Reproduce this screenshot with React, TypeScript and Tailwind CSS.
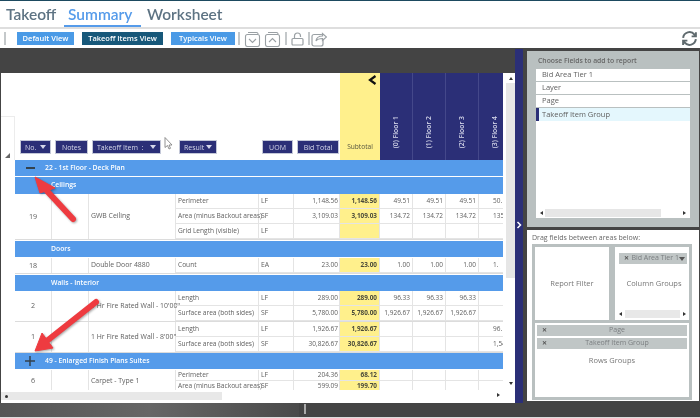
import React from "react";

const font = { fontFamily: '"Open Sans", "Liberation Sans", sans-serif' };

function Cell({ w, children, cls = "" }: { w: string; children?: React.ReactNode; cls?: string }) {
  return <div className={`${w} shrink-0 h-full flex items-center whitespace-nowrap border-r border-[#e4e4e4] ${cls}`}>{children}</div>;
}

type Sub = { r: string; u: string; b: string; s: string; f: string[] };

function SubRow({ r, u, b, s, f, h }: Sub & { h: string }) {
  return (
    <div className={`flex ${h} border-b border-[#e4e4e4]`}>
      <Cell w="w-[83px]" cls="pl-[2px] text-[6.600px]">{r}</Cell>
      <Cell w="w-[35px]" cls="pl-[2px] text-[6.800px]">{u}</Cell>
      <Cell w="w-[46px]" cls="justify-end pr-[1px] text-[6.500px]">{b}</Cell>
      <Cell w="w-[40px]" cls="justify-end pr-[2px] bg-[#fff08c] font-bold text-[6.400px] text-[#4a4a3a]">{s}</Cell>
      {f.map((v, i) => (
        <Cell key={i} w="w-[33px]" cls={`text-[6.500px] ${i === 3 ? "justify-start pl-[14px]" : "justify-end pr-[2px]"}`}>{v}</Cell>
      ))}
    </div>
  );
}

function Group({ no, item, subs, h = "h-[15px]" }: { no: string; item: string; subs: Sub[]; h?: string }) {
  return (
    <div className="flex border-b border-[#dcdcdc]">
      <Cell w="w-[37px]" cls="justify-center !h-auto">{no}</Cell>
      <Cell w="w-[37px]" cls="!h-auto" />
      <Cell w="w-[87px]" cls="pl-[2px] !h-auto text-[6.900px]">{item}</Cell>
      <div className="flex flex-col">
        {subs.map((s, i) => <SubRow key={i} {...s} h={h} />)}
      </div>
    </div>
  );
}

function Band({ label, indent, h = "h-[16px]" }: { label: string; indent: string; h?: string }) {
  return <div className={`${h} shrink-0 bg-[#559bea] flex items-center text-white font-semibold text-[6.800px] ${indent}`}>{label}</div>;
}

function HeadBtn({ cls, label, tri }: { cls: string; label: string; tri?: boolean }) {
  return (
    <div className={`${cls} h-[14px] bg-[#2b2f77] border border-[#c4c8d8] text-[#d6d8ea] flex items-center justify-between px-[4px] text-[7px] shrink-0`}>
      <span className="whitespace-pre">{label}</span>
      {tri && <span className="w-0 h-0 border-l-[3px] border-r-[3px] border-t-[4px] border-l-transparent border-r-transparent border-t-[#d6d8ea]" />}
    </div>
  );
}

function ViewBtn({ label, cls }: { label: string; cls: string }) {
  return <div className={`h-[13px] flex items-center justify-center text-white font-semibold text-[7.500px] whitespace-nowrap ${cls}`}>{label}</div>;
}

function Floor({ label }: { label: string }) {
  return (
    <div className="w-[33px] shrink-0 h-full bg-[#2b2f77] border-r border-[#44488a] flex items-end justify-center pb-[12px]">
      <span className="[writing-mode:vertical-rl] rotate-180 text-[#d6d8ea] text-[6.800px] font-semibold whitespace-nowrap">{label}</span>
    </div>
  );
}

function Stack({ up }: { up?: boolean }) {
  return (
    <svg width="17" height="16" viewBox="0 0 17 16" fill="none" stroke="#9aa0a4" strokeWidth="1.100">
      <path d="M4 1.500h8.500a1.500 1.500 0 0 1 1.500 1.500" />
      <rect x="1.500" y="3.500" width="14" height="12" rx="2" />
      <path d={up ? "M5 11l3.500-3.500 3.500 3.500" : "M5 8l3.500 3.500 3.500-3.500"} />
    </svg>
  );
}

const Sep = () => <div className="w-[2px] h-[13px] bg-[#c4c8ca] shrink-0" />;

function Chip({ label, cls, filter }: { label: string; cls: string; filter?: boolean }) {
  return (
    <div className={`h-[11px] bg-[#c0c6c6] flex items-center text-[#7a7e80] text-[7px] px-[5px] ${cls}`}>
      <span className="text-[6px] font-bold text-[#555] w-[10px]">✕</span>
      <span className="flex-1 text-center whitespace-nowrap">{label}</span>
      {filter && <span className="w-0 h-0 border-l-[3px] border-r-[3px] border-t-[4px] border-l-transparent border-r-transparent border-t-[#555] -mr-[3px]" />}
    </div>
  );
}

const none = ["", "", "", ""];

export default function App() {
  return (
    <div style={font} className="relative w-[700px] h-[418px] overflow-hidden bg-white flex flex-col blur-[0.35px]">
      <div className="h-[1px] bg-[#1d4a60] shrink-0" />
      <div className="h-[26px] shrink-0 flex items-start pl-[6px] text-[15.500px] leading-[26px] text-[#5d7383] font-semibold" style={{ fontFamily: "Lato, sans-serif" }}>
        <span className="w-[58px]">Takeoff</span>
        <span className="w-[77px] h-[26px] pl-[4px] border-b-[2px] border-[#559bea] text-[#559bea]">Summary</span>
        <span className="ml-[6px]">Worksheet</span>
      </div>
      <div className="h-[2px] bg-[#dedede] shrink-0" />
      <div className="h-[19px] shrink-0 flex items-center pl-[4px] pr-[2px]">
        <Sep />
        <ViewBtn label="Default View" cls="ml-[11px] w-[57px] bg-[#4a9ae6]" />
        <ViewBtn label="Takeoff Items View" cls="ml-[8px] w-[81px] bg-[#17587a]" />
        <ViewBtn label="Typicals View" cls="ml-[8px] w-[64px] bg-[#4a9ae6]" />
        <div className="ml-[3px]"><Sep /></div>
        <div className="ml-[4px]"><Stack /></div>
        <div className="ml-[3px]"><Stack up /></div>
        <div className="ml-[4px]"><Sep /></div>
        <svg className="ml-[4px]" width="13" height="14" viewBox="0 0 13 14" fill="none" stroke="#9aa0a4" strokeWidth="1.200">
          <rect x="1" y="6.500" width="11" height="6.500" rx="1" />
          <path d="M3.500 6.500V4a3 3 0 0 1 6 0v1" />
        </svg>
        <div className="ml-[4px]"><Sep /></div>
        <svg className="ml-[1px]" width="16" height="16" viewBox="0 0 16 16" fill="none" stroke="#9aa0a4" strokeWidth="1.200">
          <rect x="1" y="3.500" width="11" height="11.500" rx="2" />
          <path d="M5 10c.5-3.500 3-5 6.500-5V2.500L15.500 6l-4 3.500V7.500c-3 0-5 .5-6.500 2.500z" fill="#fff" />
        </svg>
        <svg className="ml-auto" width="17" height="17" viewBox="0 0 24 24" fill="none" stroke="#5f6a6e" strokeWidth="2.800">
          <path d="M3 11a9 9 0 0 1 16-4.500L21 9M21 3v6h-6" />
          <path d="M21 13a9 9 0 0 1-16 4.500L3 15M3 21v-6h6" />
        </svg>
      </div>

      <div className="flex-1 flex bg-[#444444] pt-[1px] min-h-0">
        {/* left report */}
        <div className="w-[515px] shrink-0 pl-[1px] flex flex-col">
          <div className="h-[24px] shrink-0" />
          <div className="h-[330px] bg-white flex flex-col text-[7.200px] text-[#5e5e5e] leading-none">
            <div className="flex h-[317px]">
              <div className="w-[14px] shrink-0 flex flex-col">
                <div className="h-[43px] shrink-0" />
                <div className="h-[44px] shrink-0 border-t border-r border-[#ececec] flex items-end justify-center pb-[2px]">
                  <span className="w-0 h-0 border-b-[5px] border-l-[5px] border-b-[#666] border-l-transparent" />
                </div>
              </div>
              <div className="w-[488px] shrink-0 overflow-hidden flex flex-col">
                <div className="h-[87px] shrink-0 flex">
                  <div className="w-[325px] shrink-0 flex items-end pb-[6px]">
                    <HeadBtn cls="ml-[5px] w-[31px]" label="No." tri />
                    <HeadBtn cls="ml-[4px] w-[33px] justify-center" label="Notes" />
                    <HeadBtn cls="ml-[4px] w-[69px]" label="Takeoff Item  :" tri />
                    <HeadBtn cls="ml-[18px] w-[38px]" label="Result" tri />
                    <HeadBtn cls="ml-[45px] w-[31px] !justify-center" label="UOM" />
                    <HeadBtn cls="ml-[4px] w-[42px] !justify-center" label="Bid Total" />
                  </div>
                  <div className="w-[40px] shrink-0 bg-[#fff08c] flex flex-col items-center justify-between pb-[9px] pt-[2px] text-[6.600px] text-[#55553f]">
                    <svg className="self-end mr-[3px]" width="9" height="10" viewBox="0 0 9 10" fill="none" stroke="#111" strokeWidth="2.200"><path d="M7.500 1L2 5l5.500 4" /></svg>
                    <span>Subtotal</span>
                  </div>
                  <Floor label="(0) Floor 1" />
                  <Floor label="(1) Floor 2" />
                  <Floor label="(2) Floor 3" />
                  <Floor label="(3) Floor 4" />
                </div>
                <Band label="22 - 1st Floor - Deck Plan" indent="pl-[30px]" />
                <div className="h-[1px] shrink-0" />
                <Band label="Ceilings" indent="pl-[36px]" h="h-[17px]" />
                <Group no="19" item="GWB Ceiling" subs={[
                  { r: "Perimeter", u: "LF", b: "1,148.56", s: "1,148.56", f: ["49.51", "49.51", "49.51", "50."] },
                  { r: "Area (minus Backout areas)", u: "SF", b: "3,109.03", s: "3,109.03", f: ["134.72", "134.72", "134.72", "135."] },
                  { r: "Grid Length (visible)", u: "LF", b: "", s: "", f: none },
                ]} />
                <div className="h-[1px] shrink-0" />
                <Band label="Doors" indent="pl-[36px]" />
                <div className="h-[1px] shrink-0" />
                <Group no="18" item="Double Door 4880" subs={[
                  { r: "Count", u: "EA", b: "23.00", s: "23.00", f: ["1.00", "1.00", "1.00", "1."] },
                ]} />
                <div className="h-[1px] shrink-0" />
                <Band label="Walls - Interior" indent="pl-[36px]" />
                <Group no="2" item="1 Hr Fire Rated Wall - 10'00&quot;" subs={[
                  { r: "Length", u: "LF", b: "289.00", s: "289.00", f: ["96.33", "96.33", "96.33", ""] },
                  { r: "Surface area (both sides)", u: "SF", b: "5,780.00", s: "5,780.00", f: ["1,926.67", "1,926.67", "1,926.67", ""] },
                ]} />
                <Group no="1" item="1 Hr Fire Rated Wall - 8'00&quot;" subs={[
                  { r: "Length", u: "LF", b: "1,926.67", s: "1,926.67", f: ["", "", "", "96."] },
                  { r: "Surface area (both sides)", u: "SF", b: "30,826.67", s: "30,826.67", f: ["", "", "", "1,541."] },
                ]} />
                <Band label="49 - Enlarged Finish Plans Suites" indent="pl-[30px]" />
                <div className="h-[1px] shrink-0" />
                <Group no="6" item="Carpet - Type 1" subs={[
                  { r: "Perimeter", u: "LF", b: "204.36", s: "68.12", f: none },
                  { r: "Area (minus Backout areas)", u: "SF", b: "599.09", s: "199.70", f: none },
                ]} h="h-[11px]" />
              </div>
              <div className="flex-1 flex flex-col items-center pl-[3px]">
                <div className="h-[10px] shrink-0 flex items-center">
                  <span className="w-0 h-0 border-l-[2px] border-r-[2px] border-b-[3px] border-l-transparent border-r-transparent border-b-[#333]" />
                </div>
                <div className="w-[9px] h-[195px] shrink-0 bg-[#e6e6e6]" />
                <div className="flex-1 flex items-end pb-[5px]">
                  <span className="w-0 h-0 border-l-[2.500px] border-r-[2.500px] border-t-[3px] border-l-transparent border-r-transparent border-t-[#333]" />
                </div>
              </div>
            </div>
            <div className="h-[13px] shrink-0 flex items-start pt-[2px]">
              <div className="w-[221px] h-[8px] bg-[#e8e8e8] flex items-center pl-[4px]">
                <span className="w-[3px] h-[3px] rounded-full bg-[#333]" />
              </div>
              <span className="ml-[275px] mt-[1px] w-0 h-0 border-t-[2.500px] border-b-[2.500px] border-l-[3px] border-t-transparent border-b-transparent border-l-[#333]" />
            </div>
          </div>
          <div className="flex-1 flex items-start -ml-[1px]">
            <div className="w-[299px] h-full bg-gradient-to-r from-[#555] via-[#666] to-[#4a4a4a]" />
            <div className="ml-[5px] mt-[1px] w-[2px] h-[10px] bg-[#aaaaaa]" />
          </div>
        </div>

        {/* splitter */}
        <div className="w-[8px] shrink-0 h-[354px] bg-[#2b2f77] relative">
          <svg className="absolute left-[1px] top-[172px]" width="6" height="8" viewBox="0 0 6 8" fill="none" stroke="#fff" strokeWidth="1.500"><path d="M1.500 1l3 3-3 3" /></svg>
        </div>

        {/* right column */}
        <div className="flex-1 pl-[4px] pt-[2px] pr-[1px] flex flex-col gap-[3px]">
          <div className="h-[176px] bg-[#b9c0c0] pt-[3px] px-[9px] flex flex-col shrink-0 text-[#5f5f5f]">
            <div className="text-[6.800px] font-semibold h-[15px] pl-[2px] flex items-center text-[#666]">Choose Fields to add to report</div>
            <div className="text-[7.500px] flex flex-col gap-[1px] h-[149px]">
              <div className="h-[12px] bg-white flex items-center pl-[6px]">Bid Area Tier 1</div>
              <div className="h-[12px] bg-white flex items-center pl-[6px]">Layer</div>
              <div className="h-[12px] bg-white flex items-center pl-[6px]">Page</div>
              <div className="flex-1 bg-white flex flex-col justify-between">
                <div className="h-[13px] bg-[#e4f7fd] border-l-[3px] border-[#2b2f77] flex items-center pl-[3px]">Takeoff Item Group</div>
                <div className="h-[8px] mb-[1px] flex items-center justify-between px-[4px]">
                  <span className="w-0 h-0 border-t-[2.500px] border-b-[2.500px] border-r-[3px] border-t-transparent border-b-transparent border-r-[#333]" />
                  <span className="w-[116px] h-full ml-[2px] mr-auto bg-[#e6e6e6]" />
                  <span className="w-0 h-0 border-t-[2.500px] border-b-[2.500px] border-l-[3px] border-t-transparent border-b-transparent border-l-[#333]" />
                </div>
              </div>
            </div>
          </div>
          <div className="h-[171px] bg-white pt-[2px] px-[5px] flex flex-col shrink-0 text-[#777]">
            <div className="text-[7px] h-[12px] flex items-center text-[#666]">Drag fields between areas below:</div>
            <div className="w-[160px] h-[156px] bg-[#b9c0c0] p-[3px] flex flex-col gap-[3px] text-[7.500px]">
              <div className="flex gap-[6px] h-[73px] shrink-0">
                <div className="w-[75px] bg-white flex items-center justify-center">Report Filter</div>
                <div className="w-[75px] bg-white relative flex items-center justify-center pl-[4px]">
                  Column Groups
                  <Chip label="Bid Area Tier 1" filter cls="absolute top-[6px] left-[4px] w-[68px]" />
                  <div className="absolute left-[2px] right-[1px] bottom-[2px] h-[8px] flex items-center justify-between px-[2px]">
                    <span className="w-0 h-0 border-t-[2.500px] border-b-[2.500px] border-r-[3px] border-t-transparent border-b-transparent border-r-[#333]" />
                    <span className="flex-1 h-full mx-[3px] bg-[#e8e8e8]" />
                    <span className="w-0 h-0 border-t-[2.500px] border-b-[2.500px] border-l-[3px] border-t-transparent border-b-transparent border-l-[#333]" />
                  </div>
                </div>
              </div>
              <div className="flex-1 bg-white p-[2px] flex flex-col gap-[2px]">
                <Chip label="Page" cls="" />
                <Chip label="Takeoff Item Group" cls="" />
                <div className="text-center mt-[4px]">Rows Groups</div>
              </div>
            </div>
          </div>
        </div>
      </div>
      <div className="h-[1px] bg-[#dddddd] shrink-0" />

      {/* overlays */}
      <div className="absolute left-[26px] top-[167px] w-[9px] h-[2px] bg-[#33424e]" />
      <svg className="absolute left-[25px] top-[356px]" width="10" height="10" viewBox="0 0 10 10" stroke="#33424e" strokeWidth="1.500"><path d="M0 5h10M5 0v10" /></svg>
      <svg className="absolute left-[160px] top-[136px]" width="14" height="16" viewBox="0 0 14 16" fill="#fff" stroke="#777" strokeWidth="0.800"><path d="M5 1.500v10l2.500-2 1.500 3.500 1.500-.7-1.500-3.300h3z" /></svg>
      <svg className="absolute left-0 top-0 pointer-events-none" width="700" height="418" viewBox="0 0 700 418">
        <g fill="#ee3b40" stroke="#ee3b40" strokeLinejoin="round" style={{ filter: "drop-shadow(1px 1.500px 1px rgba(0,0,0,.35))" }}>
          <path d="M73 219L47 191" strokeWidth="6" strokeLinecap="round" fill="none" />
          <path d="M35 177L55 188L40 193Z" strokeWidth="1" />
          <path d="M96 302L48 340" strokeWidth="6" strokeLinecap="round" fill="none" />
          <path d="M35 351L42 333L53 348Z" strokeWidth="1" />
        </g>
      </svg>
    </div>
  );
}
